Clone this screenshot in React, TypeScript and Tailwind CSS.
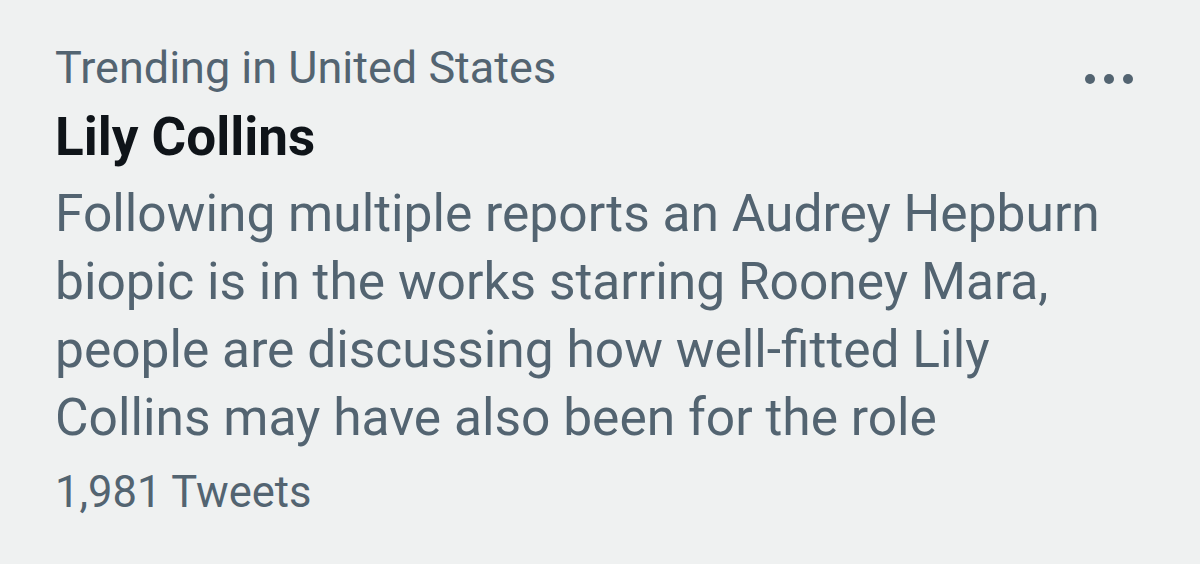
// Trend card: location label, topic, summary and tweet count
export default function App() {
  return (
    <div className="w-[1200px] h-[564px] bg-[#eff1f1] overflow-hidden" style={{ fontFamily: "Roboto, 'Noto Sans', sans-serif" }}>
      <div className="relative pt-[40px] pl-[55px] pr-[60px]">
        <div className="text-[45px] leading-[56px] text-[#536471]">Trending in United States</div>
        <div className="mt-[5px] text-[53px] leading-[72px] font-bold text-[#0f1419]">Lily Collins</div>
        <p className="mt-[7px] text-[51.5px] leading-[68px] text-[#536471] w-[1065px]">
          Following multiple reports an Audrey Hepburn biopic is in the works starring Rooney Mara, people are
          discussing how well-fitted Lily Collins may have also been for the role
        </p>
        <div className="mt-[13px] text-[43.5px] leading-[56px] text-[#536471]">1,981 Tweets</div>

        <button className="absolute top-[74px] right-[67px] flex gap-[9px]">
          <span className="w-[10px] h-[10px] rounded-full bg-[#536471]" />
          <span className="w-[10px] h-[10px] rounded-full bg-[#536471]" />
          <span className="w-[10px] h-[10px] rounded-full bg-[#536471]" />
        </button>
      </div>
    </div>
  );
}
